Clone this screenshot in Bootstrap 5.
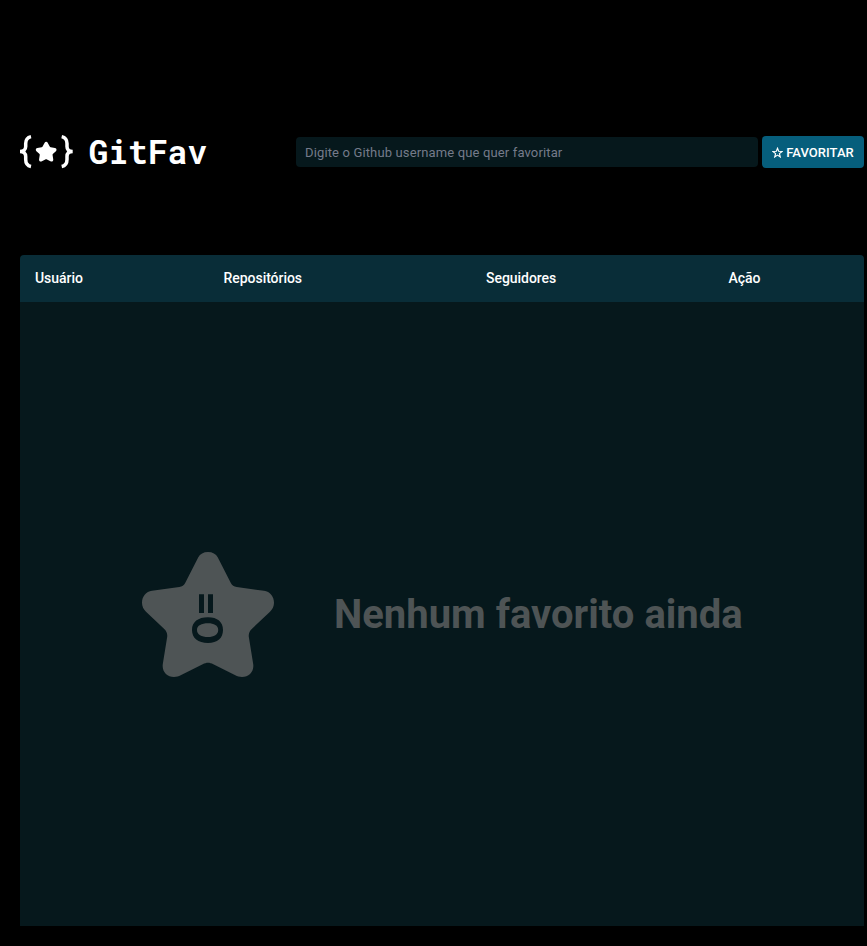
<!DOCTYPE html>
<html lang="pt-br">
<head>
<meta charset="utf-8">
<meta name="viewport" content="width=device-width, initial-scale=1">
<title>GitFav</title>
<link href="https://cdn.jsdelivr.net/npm/bootstrap@5.3.0/dist/css/bootstrap.min.css" rel="stylesheet">
<style>
body{background:#000;color:#fff;font-family:Roboto,sans-serif;overflow:hidden}
.page{width:844px;margin-left:20px;padding-top:135px}
.topbar{height:34px}
.logo-text{font:700 33px "Roboto Mono","Liberation Mono",monospace;fill:#fff}
.search-form{width:568px;gap:4px}
.search-input,.search-input:focus{width:462px;height:30px;padding:1px 9px 0;background:#06181c;border:0;border-radius:4px;color:#fff;font-size:13px;letter-spacing:.14px}
.search-input::placeholder{color:#757b8a}
.fav-btn{width:102px;height:32px;background:#065e7c;color:#fff;font-size:13px;font-weight:500;border-radius:4px;line-height:1;gap:3px;letter-spacing:.05px}
.favorites{margin-top:86px}
.favorites-head{height:47px;background:#092d38;border-radius:4px 4px 0 0;font-size:14px;font-weight:500;letter-spacing:-.04px;padding-left:15px}
.c1{width:188.5px}.c2{width:262.5px}.c3{width:242.5px}
.empty{height:624px;background:#06181c;color:#4e5455;padding:2px 0 0 122px}
.empty-text{font-size:40px;font-weight:700;line-height:1;margin-left:60px;white-space:nowrap}
</style>
</head>
<body>
<main class="page">
  <header class="topbar d-flex justify-content-between align-items-center">
    <svg width="200" height="54" viewBox="0 -10 200 54" role="img" aria-label="GitFav">
      <defs>
        <path id="star" d="M66 0C61.500 0 58 2 56.300 5.300L43.300 30.700C42 33.200 40 34.700 37.300 35L10 38.800C4 39.700 0 44.500 0 50.700C0 54.200 1.500 57.300 4 59.700L22 76.700C24.500 79 25.500 81.500 25.200 84.700L20.800 112C19.700 119.500 25 125 32 125C34.500 125 36.700 124.400 38.700 123.300L60.700 112.200C64.500 110.200 67.500 110.200 71.300 112.200L93.300 123.300C95.300 124.400 97.500 125 100 125C107 125 112.300 119.500 111.200 112L106.800 84.700C106.500 81.500 107.500 79 110 76.700L128 59.700C130.500 57.300 132 54.200 132 50.700C132 44.500 128 39.700 122 38.800L94.700 35C92 34.700 90 33.200 88.700 30.700L75.700 5.300C74 2 70.500 0 66 0Z"/>
      </defs>
      <g fill="none" stroke="#fff" stroke-width="3.500">
        <path d="M11 1.600C7.200 2.400 5.700 5 5.700 8.600V11.500C5.700 14.500 3.600 16.500 0 16.500C3.600 16.500 5.700 18.500 5.700 21.500V24.500C5.700 28.100 7.200 30.700 11 31.500"/>
        <path d="M41.700 1.600C45.500 2.400 47 5 47 8.600V11.500C47 14.500 49.100 16.500 52.700 16.500C49.100 16.500 47 18.500 47 21.500V24.500C47 28.100 45.500 30.700 41.700 31.500"/>
      </g>
      <use href="#star" fill="#fff" transform="translate(15.800 6.800) scale(.157)"/>
      <text class="logo-text" x="68.500" y="29">GitFav</text>
    </svg>
    <form class="search-form d-flex align-items-center">
      <input class="form-control search-input" type="text" placeholder="Digite o Github username que quer favoritar">
      <button class="btn fav-btn p-0 d-flex align-items-center justify-content-center" type="button">
        <svg width="11" height="11" viewBox="0 0 132 126" fill="none" stroke="#fff" stroke-width="14" stroke-linejoin="miter"><path d="M66 13L80 48L120 51L89 77L99 116L66 94L33 116L43 77L12 51L52 48Z"/></svg>
        <span>FAVORITAR</span>
      </button>
    </form>
  </header>
  <section class="favorites">
    <div class="favorites-head d-flex align-items-center">
      <div class="c1">Usuário</div><div class="c2">Repositórios</div><div class="c3">Seguidores</div><div>Ação</div>
    </div>
    <div class="empty d-flex align-items-center">
      <svg class="flex-shrink-0" width="132" height="126" viewBox="0 0 132 126">
        <use href="#star" fill="#4e5455"/>
        <path fill="#06181c" d="M57 42.300h5v18.700h-5zM66 42.300h5v18.700h-5z"/>
        <path fill="#06181c" fill-rule="evenodd" d="M66 65.300C56 65.300 50 70 50 78C50 86 56 91 66 91C75.500 91 81 86 81 78C81 70 75.500 65.300 66 65.300ZM66 71.300C72 71.300 76.200 73.500 76.200 78C76.200 82.700 72 85 66 85C59.500 85 55 82.700 55 78C55 73.500 59.500 71.300 66 71.300Z"/>
      </svg>
      <div class="empty-text">Nenhum favorito ainda</div>
    </div>
  </section>
</main>
<script src="https://cdn.jsdelivr.net/npm/bootstrap@5.3.0/dist/js/bootstrap.bundle.min.js"></script>
</body>
</html>
